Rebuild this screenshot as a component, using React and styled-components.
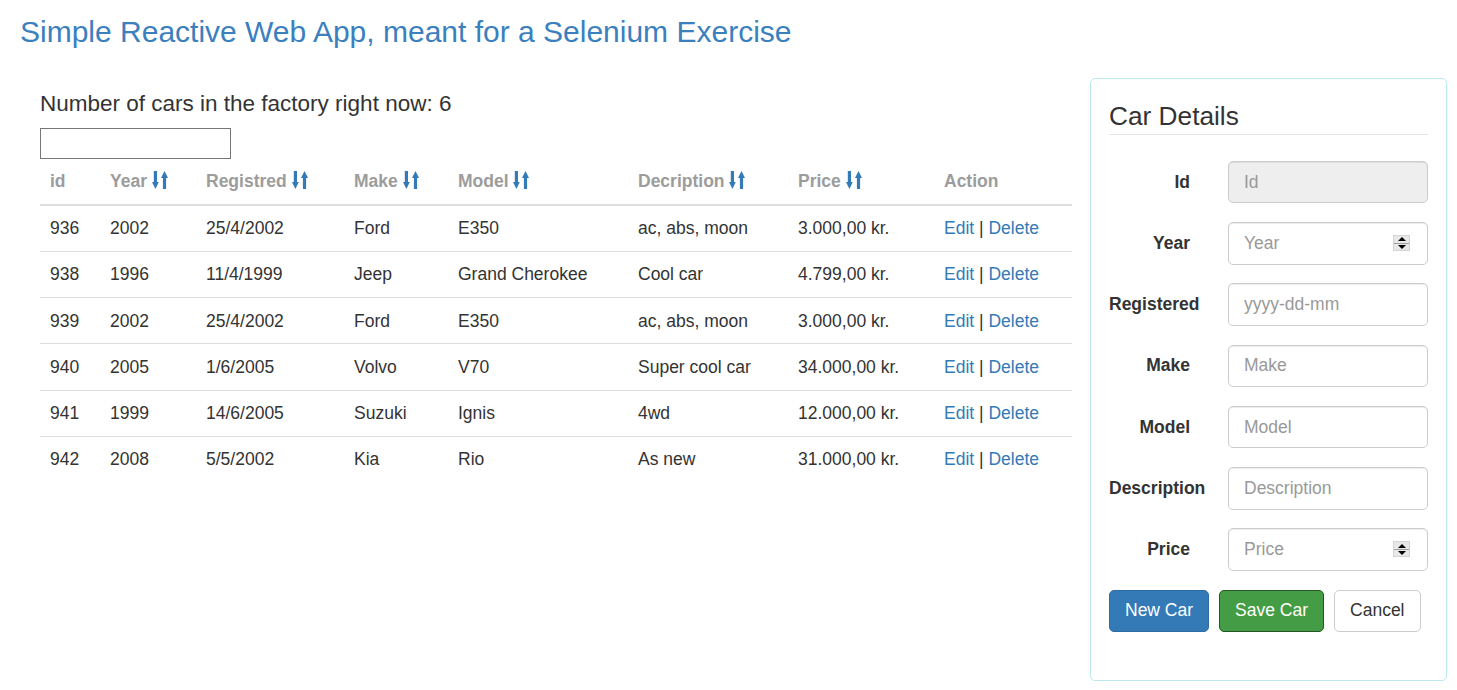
import React from "react";
import styled, { createGlobalStyle } from "styled-components";

const Global = createGlobalStyle`
  html, body { margin: 0; padding: 0; background: #fff; }
  body {
    font-family: "Liberation Sans", Arial, sans-serif;
    font-size: 17.5px;
    line-height: 25px;
    color: #333;
  }
  * { box-sizing: border-box; }
`;

const Page = styled.div`
  padding: 0 10px 9px 20px;
`;

const Title = styled.h3`
  margin: 15px 0 0 0;
  font-size: 30px;
  line-height: 33px;
  font-weight: 400;
  color: #3b80be;
`;

const Main = styled.div`
  display: flex;
  align-items: flex-start;
  margin-top: 30px;
  gap: 18px;
`;

const LeftCol = styled.div`
  width: 1032px;
  margin-left: 20px;
`;

const Count = styled.h4`
  margin: 13.5px 0 11.75px 0;
  font-size: 22.5px;
  line-height: 24.75px;
  font-weight: 400;
  color: #333;
`;

const Search = styled.input`
  display: block;
  width: 191px;
  height: 31px;
  border: 1px solid #767676;
  border-radius: 0;
  padding: 1px 2px;
  font: inherit;
  margin: 0;
`;

const Table = styled.table`
  width: 1032px;
  border-collapse: collapse;
  table-layout: fixed;
`;

const Col = styled.col`
  width: ${(p) => p.$w}px;
`;

const Th = styled.th`
  text-align: left;
  padding: 10px 10px 9.5px;
  font-weight: 700;
  color: #9c9c9c;
  border-bottom: 2px solid #ddd;
  vertical-align: bottom;
  white-space: nowrap;
`;

const Td = styled.td`
  padding: 10.5px 10px 9.75px;
  border-top: 1px solid #ddd;
  vertical-align: top;
  white-space: nowrap;
  color: #333;
`;

const FirstRow = styled.tr`
  & > td { border-top: none; }
`;

const Link = styled.a`
  color: #337ab7;
  text-decoration: none;
  cursor: pointer;
`;

const SortSvg = styled.svg`
  vertical-align: -2px;
`;

const SortIcon = () => (
  <SortSvg width="16" height="18" viewBox="0 0 16 18" fill="#337ab7">
    <rect x="1.8" y="0" width="3.2" height="11.5" />
    <polygon points="0,11 6.8,11 3.4,18" />
    <polygon points="9,7 16,7 12.5,0" />
    <rect x="10.9" y="6" width="3.2" height="12" />
  </SortSvg>
);

const Panel = styled.div`
  width: 357px;
  border: 1px solid #bce8f1;
  border-radius: 5px;
  padding: 18.75px 18px 48px;
`;

const Legend = styled.div`
  font-size: 26.25px;
  line-height: 36px;
  color: #333;
  border-bottom: 1px solid #e5e5e5;
  margin-bottom: 26px;
`;

const Group = styled.div`
  display: flex;
  align-items: flex-start;
  margin-bottom: 18.75px;
`;

const Label = styled.label`
  flex: 0 0 81px;
  min-width: 0;
  margin-right: 38px;
  padding-top: 8.75px;
  text-align: right;
  font-weight: 700;
  white-space: nowrap;
  color: #333;
`;

const InputWrap = styled.div`
  position: relative;
  flex: 0 0 200px;
`;

const Input = styled.input`
  display: block;
  width: 200px;
  height: 42.5px;
  padding: 7.5px 15px;
  font-family: inherit;
  font-size: 17.5px;
  line-height: 25px;
  color: #555;
  background: ${(p) => (p.disabled ? "#eee" : "#fff")};
  border: 1px solid #ccc;
  border-radius: 5px;
  box-shadow: inset 0 1px 1px rgba(0, 0, 0, 0.075);
  outline: none;
  &::placeholder { color: #999; opacity: 1; }
`;

const Spinner = styled.div`
  position: absolute;
  right: 18px;
  top: 13px;
  width: 17px;
  height: 16px;
  background: #e8e8e8;
  border: 1px solid #d4d4d4;
  display: flex;
  flex-direction: column;
`;

const SpinHalf = styled.div`
  flex: 1;
  display: flex;
  align-items: center;
  justify-content: center;
  border-top: ${(p) => (p.$bottom ? "1px solid #a0a0a0" : "none")};
`;

const Tri = styled.div`
  width: 0;
  height: 0;
  border-left: 4px solid transparent;
  border-right: 4px solid transparent;
  ${(p) => (p.$down ? "border-top: 4px solid #000;" : "border-bottom: 4px solid #000;")}
`;

const Buttons = styled.div`
  display: flex;
  gap: 10px;
`;

const Button = styled.button`
  font-family: inherit;
  font-size: 17.5px;
  line-height: 25px;
  padding: 7.5px 15px;
  border-radius: 5px;
  border: 1px solid ${(p) => p.$border};
  background: ${(p) => p.$bg};
  color: ${(p) => p.$fg};
  cursor: pointer;
`;

const cars = [
  ["936", "2002", "25/4/2002", "Ford", "E350", "ac, abs, moon", "3.000,00 kr."],
  ["938", "1996", "11/4/1999", "Jeep", "Grand Cherokee", "Cool car", "4.799,00 kr."],
  ["939", "2002", "25/4/2002", "Ford", "E350", "ac, abs, moon", "3.000,00 kr."],
  ["940", "2005", "1/6/2005", "Volvo", "V70", "Super cool car", "34.000,00 kr."],
  ["941", "1999", "14/6/2005", "Suzuki", "Ignis", "4wd", "12.000,00 kr."],
  ["942", "2008", "5/5/2002", "Kia", "Rio", "As new", "31.000,00 kr."],
];

const widths = [60, 96, 148, 104, 180, 160, 146, 138];
const headers = [
  ["id", false],
  ["Year", true],
  ["Registred", true],
  ["Make", true],
  ["Model", true],
  ["Decription", true],
  ["Price", true],
  ["Action", false],
];

const fields = [
  ["Id", "Id", false, true],
  ["Year", "Year", true, false],
  ["Registered", "yyyy-dd-mm", false, false],
  ["Make", "Make", false, false],
  ["Model", "Model", false, false],
  ["Description", "Description", false, false],
  ["Price", "Price", true, false],
];

export default function App() {
  return (
    <Page>
      <Global />
      <Title>Simple Reactive Web App, meant for a Selenium Exercise</Title>
      <Main>
        <LeftCol>
          <Count>Number of cars in the factory right now: 6</Count>
          <Search type="text" />
          <Table>
            <colgroup>
              {widths.map((w, i) => (
                <Col key={i} $w={w} />
              ))}
            </colgroup>
            <thead>
              <tr>
                {headers.map(([h, s]) => (
                  <Th key={h}>
                    {h}
                    {s && " "}
                    {s && <SortIcon />}
                  </Th>
                ))}
              </tr>
            </thead>
            <tbody>
              {cars.map((c, i) => {
                const Row = i === 0 ? FirstRow : "tr";
                return (
                  <Row key={c[0]}>
                    {c.map((v, j) => (
                      <Td key={j}>{v}</Td>
                    ))}
                    <Td>
                      <Link>Edit</Link> | <Link>Delete</Link>
                    </Td>
                  </Row>
                );
              })}
            </tbody>
          </Table>
        </LeftCol>
        <Panel>
          <Legend>Car Details</Legend>
          {fields.map(([label, ph, spin, disabled]) => (
            <Group key={label}>
              <Label>{label}</Label>
              <InputWrap>
                <Input placeholder={ph} disabled={disabled} />
                {spin && (
                  <Spinner>
                    <SpinHalf>
                      <Tri />
                    </SpinHalf>
                    <SpinHalf $bottom>
                      <Tri $down />
                    </SpinHalf>
                  </Spinner>
                )}
              </InputWrap>
            </Group>
          ))}
          <Buttons>
            <Button $bg="#337ab7" $border="#2e6da4" $fg="#fff">New Car</Button>
            <Button $bg="#449d44" $border="#255625" $fg="#fff">Save Car</Button>
            <Button $bg="#fff" $border="#ccc" $fg="#333">Cancel</Button>
          </Buttons>
        </Panel>
      </Main>
    </Page>
  );
}
